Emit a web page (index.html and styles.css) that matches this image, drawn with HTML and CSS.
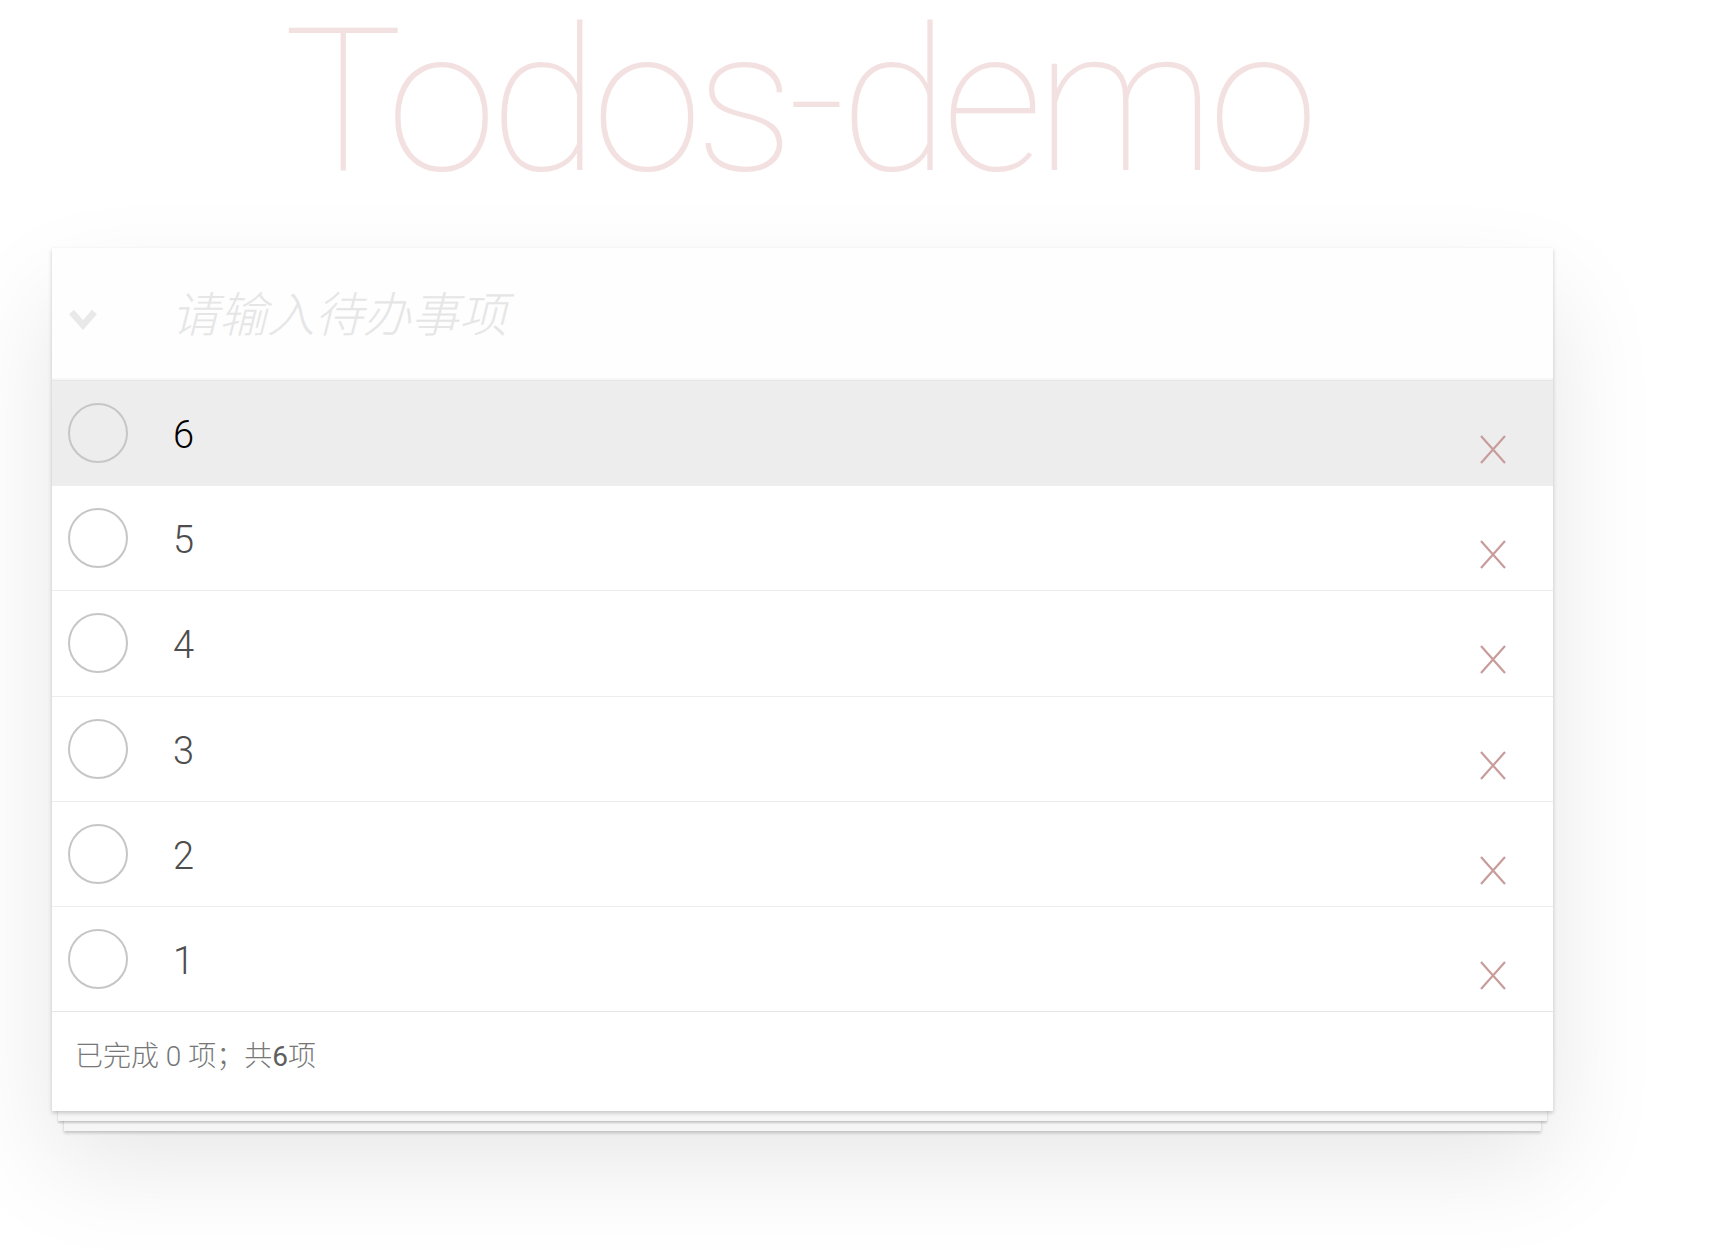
FILE: index.html
```html
<!DOCTYPE html>
<html lang="zh-CN">
<head>
<meta charset="utf-8">
<title>Todos-demo</title>
<link rel="stylesheet" href="styles.css">
</head>
<body>
<section class="app">
  <h1 class="title">Todos-demo</h1>
  <div class="card">
    <header class="entry">
      <span class="toggle-all">
        <svg width="30" height="24" viewBox="0 0 30 24"><polyline points="3.5,4 15,17 26.5,4" fill="none" stroke="#e9e9e9" stroke-width="6.5" stroke-linejoin="miter"/></svg>
      </span>
      <input class="new-todo" type="text" placeholder="请输入待办事项">
    </header>
    <ul class="list">
      <li class="item item--active"><span class="check"></span><span class="label">6</span><button class="destroy"><svg width="26" height="29" viewBox="0 0 26 29"><path d="M1 1 L25 28 M25 1 L1 28" stroke="#c99c9c" stroke-width="2.2" fill="none"/></svg></button></li>
      <li class="item"><span class="check"></span><span class="label">5</span><button class="destroy"><svg width="26" height="29" viewBox="0 0 26 29"><path d="M1 1 L25 28 M25 1 L1 28" stroke="#c99c9c" stroke-width="2.2" fill="none"/></svg></button></li>
      <li class="item"><span class="check"></span><span class="label">4</span><button class="destroy"><svg width="26" height="29" viewBox="0 0 26 29"><path d="M1 1 L25 28 M25 1 L1 28" stroke="#c99c9c" stroke-width="2.2" fill="none"/></svg></button></li>
      <li class="item"><span class="check"></span><span class="label">3</span><button class="destroy"><svg width="26" height="29" viewBox="0 0 26 29"><path d="M1 1 L25 28 M25 1 L1 28" stroke="#c99c9c" stroke-width="2.2" fill="none"/></svg></button></li>
      <li class="item"><span class="check"></span><span class="label">2</span><button class="destroy"><svg width="26" height="29" viewBox="0 0 26 29"><path d="M1 1 L25 28 M25 1 L1 28" stroke="#c99c9c" stroke-width="2.2" fill="none"/></svg></button></li>
      <li class="item"><span class="check"></span><span class="label">1</span><button class="destroy"><svg width="26" height="29" viewBox="0 0 26 29"><path d="M1 1 L25 28 M25 1 L1 28" stroke="#c99c9c" stroke-width="2.2" fill="none"/></svg></button></li>
    </ul>
    <footer class="footer">已完成 0 项；共<strong>6</strong>项</footer>
  </div>
</section>
</body>
</html>
```
FILE: styles.css
```css
html, body {
  margin: 0;
  padding: 0;
  background: #ffffff;
}

html {
  min-height: 100%;
}

body {
  min-height: 1250px;
  font-family: "Roboto", "Noto Sans CJK SC", sans-serif;
  -webkit-font-smoothing: antialiased;
}

.app {
  width: 1501px;
  margin-left: 52px;
  padding-top: 2px;
  padding-bottom: 140px;
}

.title {
  margin: 0 0 46px;
  padding-right: 10px;
  font-family: "Roboto", "Inter", sans-serif;
  font-size: 200px;
  line-height: 200px;
  font-weight: 100;
  color: rgba(175, 47, 47, 0.15);
  text-align: center;
  letter-spacing: -7px;
  white-space: nowrap;
}

.card {
  background: #fff;
  box-shadow:
    0 2px 4px 0 rgba(0, 0, 0, 0.2),
    0 16px 0 -6px #f6f6f6,
    0 18px 2px -6px rgba(0, 0, 0, 0.2),
    0 32px 0 -12px #f6f6f6,
    0 34px 3px -12px rgba(0, 0, 0, 0.2),
    0 50px 100px 0 rgba(0, 0, 0, 0.1);
}

.entry {
  display: flex;
  align-items: center;
  height: 132px;
  background: rgba(0, 0, 0, 0.004);
  box-shadow: inset 0 -2px 1px rgba(0, 0, 0, 0.03);
}

.toggle-all {
  display: block;
  width: 30px;
  height: 24px;
  margin-left: 16px;
  margin-top: 12px;
}

.toggle-all svg {
  display: block;
}

.new-todo {
  flex: 1;
  margin-left: 73px;
  margin-top: -6px;
  padding: 0;
  border: 0;
  outline: none;
  background: transparent;
  font-family: "Noto Sans CJK SC", sans-serif;
  font-size: 48px;
  font-style: italic;
  font-weight: 300;
  color: #4d4d4d;
}

.new-todo::placeholder {
  color: #e6e6e6;
  font-style: italic;
}

.list {
  list-style: none;
  margin: 0;
  padding: 0;
  border-top: 1px solid #e6e6e6;
}

.item {
  display: flex;
  align-items: center;
  height: 104.2px;
  border-bottom: 1px solid #ededed;
  background: #fff;
}

.item:last-child {
  border-bottom: none;
}

.item--active {
  background: #ededed;
}

.check {
  box-sizing: border-box;
  width: 60px;
  height: 60px;
  margin-left: 16px;
  border: 2px solid #c6c6c6;
  border-radius: 50%;
  flex: none;
}

.label {
  flex: 1;
  margin-left: 45px;
  margin-top: 4px;
  font-size: 38px;
  font-weight: 300;
  color: #4d4d4d;
}

.item--active .label {
  color: #000;
}

.destroy {
  align-self: flex-start;
  margin: 54px 47px 0 0;
  padding: 0;
  width: 26px;
  height: 29px;
  border: 0;
  background: none;
  flex: none;
}

.destroy svg {
  display: block;
}

.footer {
  box-sizing: border-box;
  height: 100px;
  border-top: 1px solid #e6e6e6;
  padding: 25px 23px 0;
  font-size: 28px;
  line-height: 40px;
  font-weight: 300;
  color: #777;
}

.footer strong {
  font-weight: 400;
  color: #5e5e5e;
}
```
